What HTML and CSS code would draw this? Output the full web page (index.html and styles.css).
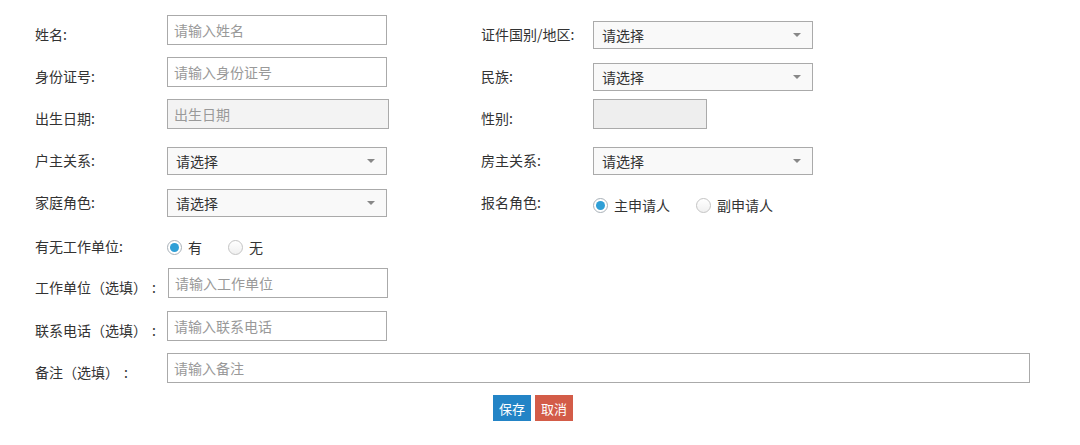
FILE: index.html
```html
<!DOCTYPE html>
<html lang="zh-CN">
<head>
<meta charset="utf-8">
<title>表单</title>
<link rel="stylesheet" href="styles.css">
</head>
<body>
<form class="form">
  <div class="row">
    <label class="lbl">姓名:</label>
    <div class="ctl"><input class="inp" type="text" placeholder="请输入姓名"></div>
    <label class="lbl">证件国别/地区:</label>
    <div class="ctl"><div class="sel"><span>请选择</span><i class="caret"></i></div></div>
  </div>
  <div class="row">
    <label class="lbl">身份证号:</label>
    <div class="ctl"><input class="inp" type="text" placeholder="请输入身份证号"></div>
    <label class="lbl">民族:</label>
    <div class="ctl"><div class="sel"><span>请选择</span><i class="caret"></i></div></div>
  </div>
  <div class="row">
    <label class="lbl">出生日期:</label>
    <div class="ctl"><input class="inp inp-disabled" type="text" placeholder="出生日期" disabled></div>
    <label class="lbl">性别:</label>
    <div class="ctl"><div class="gender"></div></div>
  </div>
  <div class="row">
    <label class="lbl">户主关系:</label>
    <div class="ctl"><div class="sel"><span>请选择</span><i class="caret"></i></div></div>
    <label class="lbl">房主关系:</label>
    <div class="ctl"><div class="sel"><span>请选择</span><i class="caret"></i></div></div>
  </div>
  <div class="row">
    <label class="lbl">家庭角色:</label>
    <div class="ctl"><div class="sel"><span>请选择</span><i class="caret"></i></div></div>
    <label class="lbl">报名角色:</label>
    <div class="ctl">
      <div class="radios radios-r">
        <span class="opt"><i class="radio checked"></i>主申请人</span>
        <span class="opt"><i class="radio"></i>副申请人</span>
      </div>
    </div>
  </div>
  <div class="row row-43">
    <label class="lbl lbl-radio">有无工作单位:</label>
    <div class="ctl">
      <div class="radios">
        <span class="opt"><i class="radio checked"></i>有</span>
        <span class="opt"><i class="radio"></i>无</span>
      </div>
    </div>
  </div>
  <div class="row row-43">
    <label class="lbl">工作单位（选填）<span class="colon">:</span></label>
    <div class="ctl"><input class="inp inp-shift" type="text" placeholder="请输入工作单位"></div>
  </div>
  <div class="row">
    <label class="lbl">联系电话（选填）<span class="colon">:</span></label>
    <div class="ctl"><input class="inp" type="text" placeholder="请输入联系电话"></div>
  </div>
  <div class="row row-wide">
    <label class="lbl">备注（选填）<span class="colon">:</span></label>
    <div class="ctl"><input class="inp inp-wide" type="text" placeholder="请输入备注"></div>
  </div>
  <div class="actions">
    <button type="button" class="btn btn-save">保存</button>
    <button type="button" class="btn btn-cancel">取消</button>
  </div>
</form>
</body>
</html>
```

FILE: styles.css
```css
* { box-sizing: border-box; }

body {
  margin: 0;
  background: #fff;
  font-family: "Noto Sans CJK SC", "Noto Sans", sans-serif;
  font-size: 14px;
  color: #333;
}

.form {
  padding: 15px 0 0 35px;
}

.row {
  display: grid;
  grid-template-columns: 132px 314px 112px 240px;
  height: 42px;
}

.row-43 { height: 43px; }

.row-wide {
  grid-template-columns: 132px 863px;
}

.lbl {
  padding-top: 10px;
  line-height: 19px;
  color: #333;
  white-space: nowrap;
}

.colon {
  margin-left: 5px;
}

.lbl-radio { padding-top: 12px; }

.inp {
  display: block;
  width: 220px;
  height: 30px;
  margin: 0;
  padding: 0 6px;
  border: 1px solid #aaa;
  border-radius: 0;
  background: #fff;
  font-family: inherit;
  font-size: 14px;
  color: #333;
  outline: none;
}

.inp::placeholder { color: #999; }

.inp-disabled {
  width: 222px;
  background: #f3f3f3;
}

.inp-shift { margin-left: 1px; }

.inp-wide { width: 863px; }

.sel {
  position: relative;
  width: 220px;
  height: 28px;
  margin-top: 6px;
  padding-left: 8px;
  border: 1px solid #aaa;
  background: #f9f9f9;
  line-height: 26px;
  color: #333;
}

.caret {
  position: absolute;
  right: 11px;
  top: 11px;
  width: 0;
  height: 0;
  border-left: 4px solid transparent;
  border-right: 4px solid transparent;
  border-top: 4px solid #888;
}

.gender {
  width: 114px;
  height: 30px;
  border: 1px solid #aaa;
  background: #eee;
}

.radios {
  display: flex;
  gap: 26px;
  padding-top: 12px;
  line-height: 20px;
}

.radios-r {
  padding-top: 12px;
  gap: 26px;
}

.opt {
  display: flex;
  align-items: center;
  gap: 6px;
  color: #333;
}

.radio {
  display: block;
  width: 15px;
  height: 15px;
  border-radius: 50%;
  border: 1px solid #c4c4c4;
  background: linear-gradient(#fff, #f0f0f0);
  position: relative;
}

.radio.checked {
  border-color: #a9b1b8;
  background: #fff;
}

.radio.checked::after {
  content: "";
  position: absolute;
  left: 2px;
  top: 2px;
  width: 9px;
  height: 9px;
  border-radius: 50%;
  background: #2f9fd6;
}

.actions {
  display: flex;
  gap: 4px;
  padding-left: 458px;
}

.btn {
  width: 38px;
  height: 26px;
  padding: 0;
  border: 0;
  border-radius: 0;
  font-family: inherit;
  font-size: 13px;
  color: #fff;
  cursor: pointer;
}

.btn-save { background: #2384c6; }
.btn-cancel { background: #d35c48; }
```
